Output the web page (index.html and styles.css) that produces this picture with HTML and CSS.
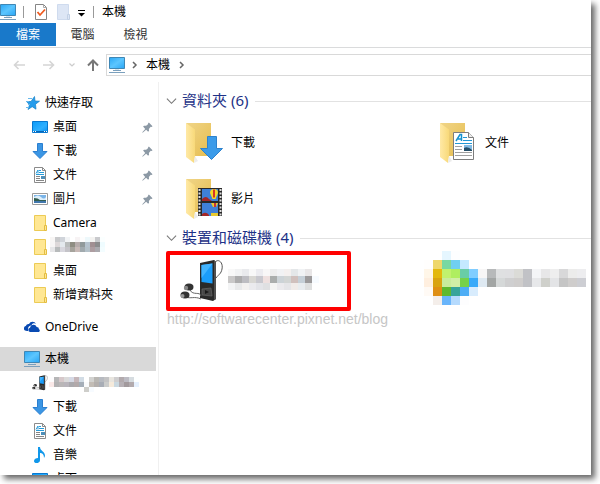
FILE: index.html
```html
<!DOCTYPE html>
<html lang="zh-Hant">
<head>
    <meta charset="UTF-8">
    <meta name="viewport" content="width=device-width, initial-scale=1.0">
    <title>本機</title>
    <link rel="stylesheet" href="styles.css">
</head>
<body>
    <!-- Shared icons -->
    <svg class="sprite" xmlns="http://www.w3.org/2000/svg">
        <defs>
            <linearGradient id="screen" x1="0" y1="0" x2="1" y2="1">
                <stop offset="0" stop-color="#2aa7f5"/>
                <stop offset=".5" stop-color="#5cc6ff"/>
                <stop offset="1" stop-color="#28a5f5"/>
            </linearGradient>
            <linearGradient id="desk" x1="0" y1="0" x2="1" y2="1">
                <stop offset="0" stop-color="#0a9af8"/>
                <stop offset=".6" stop-color="#2fb0ff"/>
                <stop offset="1" stop-color="#0a8ff0"/>
            </linearGradient>
            <linearGradient id="back" x1="0" y1="0" x2="1" y2="1">
                <stop offset="0" stop-color="#f0d588"/>
                <stop offset="1" stop-color="#e6bd4e"/>
            </linearGradient>
            <linearGradient id="flap" x1="0" y1="0" x2="1" y2="0">
                <stop offset="0" stop-color="#ffe9a6"/>
                <stop offset="1" stop-color="#f8d979"/>
            </linearGradient>
        </defs>
        <symbol id="pc" viewBox="0 0 16 16">
            <path d="M.5 .5h15v11H.5z" fill="url(#screen)" stroke="#3f87b5"/>
            <path d="M4 13.5h8M0 15.5h16" stroke="#7ba0bd"/>
            <path d="M6 12h4v1H6z" fill="#d6e4ee"/>
        </symbol>
        <symbol id="desktop" viewBox="0 0 16 16">
            <path d="M.5 2.5h15v11H.5z" fill="url(#desk)" stroke="#0878d0"/>
            <path d="M1 12.5h14" stroke="#0865b5"/>
            <path d="M1 12.5h1M3 12.5h1M12 12.5h1M14 12.5h1" stroke="#fff"/>
        </symbol>
        <symbol id="down" viewBox="0 0 16 16">
            <path d="M5.5.5h5v8h4.500L8 15.5 1 8.500h4.500z" fill="#3b96e4" stroke="#2b7fd0"/>
        </symbol>
        <symbol id="doc" viewBox="0 0 16 16">
            <path d="M2.500.5h8l3 3v12h-11z" fill="#fff" stroke="#8b8b8b"/>
            <path d="M10.500.5v3h3" fill="none" stroke="#8b8b8b"/>
            <path d="M4 6.500 6 3v3.500M7 3.500h2M7 5.500h5M4 7.500h8" fill="none" stroke="#279bd9"/>
            <path d="M4 9.500h4M4 11.500h4M4 13.500h8" stroke="#858585"/>
            <path d="M9 9h4v3H9z" fill="#4e8fb9"/>
        </symbol>
        <symbol id="picture" viewBox="0 0 16 16">
            <path d="M.5 2.500h15v11H.5z" fill="#fff" stroke="#9b9b9b"/>
            <path d="M2 4h12v8H2z" fill="#7ab4e8"/>
            <path d="M2 6q4-3 7 0t5 0v3H2z" fill="#dceefa"/>
            <path d="M2 7q4 0 6 2h6v1H2z" fill="#335e50"/>
            <path d="M2 10h12v2H2z" fill="#4177ad"/>
        </symbol>
        <symbol id="folder" viewBox="0 0 16 16">
            <path d="M2.500.5h11v15h-11z" fill="#ffe793" stroke="#eccb55"/>
            <path d="M12.500 10.500h2v5h-2z" fill="#ffe793" stroke="#e3bc42"/>
        </symbol>
        <symbol id="pin" viewBox="0 0 12 12">
            <path d="m7.500.5 4 4-1 1-1-.2-2 2.200.2 2-1 1L4.500 8.500.7 11.600l-.4-.4L3.500 7.500 1.200 5l1-1 2.300.2L6.800 2.200 6.500 1.500z" fill="#8c99a5"/>
        </symbol>
        <symbol id="star" viewBox="0 0 16 16">
            <path d="m10.500 1.500.5 4.500 4.500.2-4 3 .5 5-3.800-2.500-4.200 2.800 1.500-4.700-3-3.300H7z" fill="#249cec" stroke="#147fc5" stroke-width=".7"/>
            <path d="M4 3.500h4M2 6.500h3M4 9.500h2M2 12.500h3" stroke="#67b8ec"/>
        </symbol>
        <symbol id="cloud" viewBox="0 0 16 16">
            <path d="M1 11.500a2.500 2.500 0 0 1 .8-4.500A3 3 0 0 1 5 5a4 4 0 0 1 7-.3 3 3 0 0 0-4.500 1.500A4 4 0 0 0 4 10v2H3z" fill="#094ab2"/>
            <path d="M6 13a2.200 2.200 0 0 1 0-4.300A3.500 3.500 0 0 1 12.700 8a2.300 2.300 0 0 1 2.300 2.200A1.600 1.600 0 0 1 15 13z" fill="#094ab2"/>
        </symbol>
        <symbol id="music" viewBox="0 0 16 16">
            <path d="M6 0h2c0 4 5 4 5 9l-1 2c0-4-2-5-4-5v7c0 4-6 4-6 1 0-2 2-3 4-3z" fill="#1097ea"/>
        </symbol>
        <symbol id="player" viewBox="0 0 44 44">
            <path d="M34 12c-2-15 10-12 8-2-1 5-3 5-6 9" fill="none" stroke="#555" stroke-width="1"/>
            <path d="m20 4 14-3 2 2v37l-3 2-13-3z" fill="#292929"/>
            <path d="m34 1 2 2v37l-2 1z" fill="#505050"/>
            <path d="m21.500 6 11-1.500v20L21.500 23z" fill="#1b9dfa"/>
            <path d="m21.500 6 11-1.500L21.500 19z" fill="#42b4ff"/>
            <path d="m22 30 9-1 1 8-10-1z" fill="#464646" stroke="#666" stroke-width=".7"/>
            <path d="m25 31 4 2-4 2z" fill="#191919"/>
            <path d="M10 31c3 6 10 1 11 6M6 38c4 2 9-1 15 2" fill="none" stroke="#666"/>
            <ellipse cx="9" cy="28" rx="4.500" ry="3.500" fill="#333"/>
            <circle cx="6" cy="29" r="2.200" fill="#888"/>
            <ellipse cx="5" cy="36" rx="4.500" ry="3.500" fill="#333"/>
            <circle cx="2.500" cy="37" r="2" fill="#999"/>
        </symbol>
        <symbol id="bigfolder" viewBox="0 0 40 40">
            <path d="M0 0h25v33H8z" fill="url(#back)"/>
            <path d="m0 0 9 6.500V33l-1 7-8-6z" fill="url(#flap)"/>
            <path d="m8 40 1-7 3 5z" fill="#ececec"/>
        </symbol>
        <symbol id="toggle" viewBox="0 0 12 8">
            <path d="m1 1.500 5 5 5-5" fill="none" stroke="#777" stroke-width="1.200"/>
        </symbol>
        <symbol id="crumb" viewBox="0 0 6 8">
            <path d="m1 1 3 3-3 3" fill="none" stroke="#666" stroke-width="1.500"/>
        </symbol>
    </svg>

    <div class="window">
        <div class="titlebar">
            <svg class="icon"><use href="#pc"/></svg>
            <span class="separator"></span>
            <svg class="tool-check" viewBox="0 0 12 16">
                <path d="M.5.5h8l3 3v12H.5z" fill="#fff" stroke="#858585"/>
                <path d="M8.500.5v3h3" fill="none" stroke="#aaa"/>
                <path d="m2.500 8 2.500 3 5-5.500" fill="none" stroke="#ef5a1e" stroke-width="1.800"/>
            </svg>
            <svg class="tool-folder" viewBox="0 0 14 16">
                <path d="M.5.5h11v15H.5z" fill="#dde6f5" stroke="#cfdbee"/>
                <path d="M10.500 10.500h2v5h-2z" fill="#dde6f5" stroke="#c2d0e5"/>
            </svg>
            <svg class="tool-more" viewBox="0 0 7 7">
                <path d="M0 .5h7" stroke="#000"/>
                <path d="M0 3h7L3.500 6.500z" fill="#000"/>
            </svg>
            <span class="separator"></span>
            <span class="title">本機</span>
        </div>
        <div class="tabs">
            <span class="tab active">檔案</span>
            <span class="tab">電腦</span>
            <span class="tab">檢視</span>
        </div>
        <div class="toolbar">
            <svg class="arrow back" viewBox="0 0 12 10"><path d="M12 5H1.500M5.500 1l-4 4 4 4" fill="none" stroke="#d5d5d5" stroke-width="1.600"/></svg>
            <svg class="arrow forward" viewBox="0 0 12 10"><path d="M0 5h10.500M6.500 1l4 4-4 4" fill="none" stroke="#d5d5d5" stroke-width="1.600"/></svg>
            <svg class="recent" viewBox="0 0 6 4"><path d="m.5.5 2.500 2.500L5.500.5" fill="none" stroke="#ccc" stroke-width="1.200"/></svg>
            <svg class="up" viewBox="0 0 12 12"><path d="M6 12V1.500M1 6.500l5-5 5 5" fill="none" stroke="#777" stroke-width="2"/></svg>
            <div class="address">
                <svg class="icon"><use href="#pc"/></svg>
                <svg class="crumb"><use href="#crumb"/></svg>
                <span class="place">本機</span>
                <svg class="crumb"><use href="#crumb"/></svg>
            </div>
        </div>

        <div class="content">
            <div class="sidebar">
                <div class="row root"><svg class="icon"><use href="#star"/></svg><span>快速存取</span></div>
                <div class="row"><svg class="icon"><use href="#desktop"/></svg><span>桌面</span><svg class="pin"><use href="#pin"/></svg></div>
                <div class="row"><svg class="icon"><use href="#down"/></svg><span>下載</span><svg class="pin"><use href="#pin"/></svg></div>
                <div class="row"><svg class="icon"><use href="#doc"/></svg><span>文件</span><svg class="pin"><use href="#pin"/></svg></div>
                <div class="row"><svg class="icon"><use href="#picture"/></svg><span>圖片</span><svg class="pin"><use href="#pin"/></svg></div>
                <div class="row"><svg class="icon"><use href="#folder"/></svg><span>Camera</span></div>
                <div class="row"><svg class="icon"><use href="#folder"/></svg><svg class="mosaic mosaic-folder" data-name="folder" data-size="5"></svg></div>
                <div class="row"><svg class="icon"><use href="#folder"/></svg><span>桌面</span></div>
                <div class="row"><svg class="icon"><use href="#folder"/></svg><span>新增資料夾</span></div>
                <div class="row root spaced"><svg class="icon"><use href="#cloud"/></svg><span>OneDrive</span></div>
                <div class="row root spaced selected"><svg class="icon"><use href="#pc"/></svg><span>本機</span></div>
                <div class="row"><svg class="icon"><use href="#player"/></svg><svg class="mosaic mosaic-phone" data-name="phone" data-size="5"></svg></div>
                <div class="row"><svg class="icon"><use href="#down"/></svg><span>下載</span></div>
                <div class="row"><svg class="icon"><use href="#doc"/></svg><span>文件</span></div>
                <div class="row"><svg class="icon"><use href="#music"/></svg><span>音樂</span></div>
                <div class="row"><svg class="icon"><use href="#desktop"/></svg><span>桌面</span></div>
            </div>

            <div class="main">
                <div class="heading"><svg class="toggle"><use href="#toggle"/></svg><span>資料夾 (6)</span></div>
                <div class="folders">
                    <div class="item">
                        <svg class="large" viewBox="0 0 40 40">
                            <use href="#bigfolder" width="40" height="40"/>
                            <path d="M21.500 13.500h9v12h6L25.500 36.500 14.500 25.500h7z" fill="#3b9be9" stroke="#2d82cd"/>
                        </svg>
                        <span>下載</span>
                    </div>
                    <div class="item">
                        <svg class="large" viewBox="0 0 40 40">
                            <use href="#bigfolder" width="40" height="40"/>
                            <path d="M13.500 9.500h15l5 5v22h-20z" fill="#fff" stroke="#7d7d7d"/>
                            <path d="M28.500 9.500v5h5" fill="#eee" stroke="#7d7d7d"/>
                            <path d="m16 18 4-6.500h1.500V18M18 16h4" fill="none" stroke="#1592cf" stroke-width="1.500"/>
                            <path d="M23 14.500h4M23 17.500h9M15 20.500h17" stroke="#2398d5"/>
                            <path d="M15 23.500h7M15 26.500h7M15 29.500h17M15 32.500h17" stroke="#a0a0a0"/>
                            <path d="M24 22h8v6h-8z" fill="#82bbe4"/>
                            <path d="M24 25q4-2 8 2v1h-8z" fill="#254e67"/>
                        </svg>
                        <span>文件</span>
                    </div>
                    <div class="item">
                        <svg class="large" viewBox="0 0 40 40">
                            <use href="#bigfolder" width="40" height="40"/>
                            <path d="M12 9h24v28H12z" fill="#292929"/>
                            <path d="M13.500 10v27M34.500 10v27" stroke="#ddd" stroke-width="2" stroke-dasharray="2 1.500"/>
                            <path d="M16 10h16v12H16zM16 24h16v13H16z" fill="#3f80d8"/>
                            <path d="M16 20q4-4 7 0l3 2H16zM16 35q4-3 7 1v1h-7z" fill="#a32729"/>
                            <path d="M24 14a4 4 0 0 1 8 0l-2.500 6h-3z" fill="#f5d629"/>
                            <path d="M27 10.500h2v8h-2z" fill="#d93427"/>
                            <path d="M25 24h7l-2 4h-3zM25 34h7v3h-7z" fill="#e8ca30"/>
                            <path d="M28 24h2v4h-2z" fill="#c83636"/>
                        </svg>
                        <span>影片</span>
                    </div>
                </div>

                <div class="heading devices-heading"><svg class="toggle"><use href="#toggle"/></svg><span>裝置和磁碟機 (4)</span></div>
                <div class="devices">
                    <div class="device highlighted">
                        <svg class="player"><use href="#player"/></svg>
                        <svg class="mosaic mosaic-device" data-name="device" data-size="7"></svg>
                    </div>
                    <svg class="mosaic mosaic-drive" data-name="drive" data-size="9"></svg>
                </div>
                <div class="blog">http://softwarecenter.pixnet.net/blog</div>
            </div>
        </div>
    </div>

    <script>
        // Each row is a list of colours, a dash leaves the cell empty
        const mosaics = {
            folder: [
                'f8f6f5 c9cacc d0d4da f2f4f6 - f7f3f4 fdfdfd edf8fb f4f3f1 c9cacd fbffff',
                'f7f5f5 ddd8d9 e4e9ee b9bcbc 8f8d82 b6acab 919a9b b5c3ce a18f92 8c8c8d effcff',
                'e6e6e8 b7babb d8d7de c4c3c8 a6a39c c8b9b6 a1aaae b4c1c9 ad9da1 aaa9ae f3fdff'
            ],
            phone: [
                'fdfcfd b6b6b7 d6c8ca dadada d6d9e5 c5b6b9 d2dce5 - d2d2d0 b9b7b3 b7bac0 c3c3c4 e8e5df cfcecf b2aaad bcbbc3 d6dce0 fdffff',
                'fae9e8 b2b1b2 b9b6b7 b8b4bb aaa9ad b2a9aa a5aeb8 f9fafb c2bcb5 b3afad a8adb6 cbcccb f5eadb cad8e0 b6b0b5 a29a9d b2aaad e5f0fd',
                '- - - - - - - cececa f7fbff - - - - - - - - -'
            ],
            device: [
                'f8f8f8 f1f2f3 e9eaed f8f8f8 ececf0 f8f7f7 ededed f1f2f4 f4f0ef e4e7e9 f0f2f4 e8e6e7 -',
                'c9c8c8 acacad bdbdc2 d8d7d3 c8c8ce eee0df aaadac ccd3d7 d2d5d4 d0c0bd c5cfd7 9c9a9b f7fbff',
                'f3f4f5 e8e9ea f3f1f0 ebebee e3e4e8 dfe0e2 f4f4f3 ebeaed e5e5e8 f0ebe9 e8ecef dedfdf -'
            ],
            drive: [
                '- - e5f6ff fdfeff - - - - - - - - - - - - - -',
                'fffefd eed76b 79d8a1 70cff1 c4e9ff - - - - - - - - - - - - -',
                'fff6e8 e3b80d c1f16d afee60 69cda6 80cdff f7f6f6 b7b9ba dfe0e1 dfdfe1 dbdbd7 c1c2c6 f4f5f7 e7e7e8 eeeeee d8d8d9 ececeb ededef',
                'ffefdf d9a310 c8eb9d d0eea6 76d149 38a9f9 dee9f2 a2a5a4 d5d8d8 cfcfd0 cfcdcc c1c2c6 e7e8ea cfd0cb e3e4e6 c5c5c5 cfcdcc cdced3',
                'fffaf5 df8f14 5eb92f 37a49a 4dadf5 d8ecfd - - - - - - - - - - - -',
                '- f4eeea 69b5fb b5dafd fdfdfe - - - - - - - - - - - - -'
            ]
        };

        document.querySelectorAll('.mosaic').forEach(svg => {
            const size = Number(svg.dataset.size);
            mosaics[svg.dataset.name].forEach((line, y) => {
                line.split(' ').forEach((color, x) => {
                    if (color === '-') return;
                    const rect = document.createElementNS('http://www.w3.org/2000/svg', 'rect');
                    rect.setAttribute('x', x * size);
                    rect.setAttribute('y', y * size);
                    rect.setAttribute('width', size);
                    rect.setAttribute('height', size);
                    rect.setAttribute('fill', '#' + color);
                    svg.appendChild(rect);
                });
            });
        });
    </script>
</body>
</html>
```

FILE: styles.css
```css
* {
    box-sizing: border-box;
}

body {
    margin: 0;
    height: 484px;
    overflow: hidden;
    background: #fff;
    color: #000;
    font: 12px "Noto Sans", "Noto Sans CJK TC", sans-serif;
}

svg {
    display: block;
    flex: none;
}

.sprite {
    position: absolute;
    width: 0;
    height: 0;
}

.window {
    display: flex;
    flex-direction: column;
    width: 591px;
    height: 475px;
    overflow: hidden;
    background: #fff;
    box-shadow: 4px 4px 6px rgba(0, 0, 0, 0.6);
}

.icon {
    width: 16px;
    height: 16px;
}

.titlebar {
    display: flex;
    align-items: center;
    height: 23px;
    flex: none;
}

.title {
    padding-bottom: 1px;
}

.separator {
    width: 1px;
    height: 12px;
    margin: 0 11px 0 7px;
    background: #999;
}

.tool-check {
    width: 12px;
    height: 16px;
}

.tool-folder {
    width: 14px;
    height: 16px;
    margin: 0 7px 0 10px;
}

.tool-more {
    width: 7px;
    height: 7px;
    margin-top: 3px;
}

.tool-more + .separator {
    margin: 0 8px;
}

.tabs {
    display: flex;
    height: 25px;
    flex: none;
    border-bottom: 1px solid #dadbdc;
    color: #333;
}

.tab {
    display: flex;
    align-items: center;
    justify-content: center;
    width: 53px;
    height: 23px;
    padding-bottom: 1px;
}

.tab.active {
    width: 56px;
    background: #1979ca;
    color: #fff;
}

.toolbar {
    display: flex;
    align-items: center;
    height: 34px;
    padding: 0 0 0 13px;
    flex: none;
}

.arrow {
    width: 12px;
    height: 10px;
}

.forward {
    margin-left: 18px;
}

.recent {
    width: 6px;
    height: 4px;
    margin: 0 12px 0 14px;
}

.up {
    width: 12px;
    height: 12px;
}

.address {
    display: flex;
    align-items: center;
    flex: 1;
    height: 22px;
    margin-left: 7px;
    padding-left: 2px;
    border: 1px solid #d9d9d9;
    border-right: 0;
}

.crumb {
    width: 6px;
    height: 8px;
    margin: 0 0 1px 7px;
}

.place {
    margin-left: 8px;
    padding-bottom: 2px;
}

.place + .crumb {
    margin-left: 9px;
}

.content {
    display: flex;
    flex: 1;
    min-height: 0;
}

.sidebar {
    width: 159px;
    padding-top: 9px;
    border-right: 1px solid #f0f0f0;
    overflow: hidden;
}

.row {
    display: flex;
    align-items: center;
    gap: 5px;
    width: 156px;
    height: 24px;
    padding: 0 3px 0 32px;
}

.row span,
.item span {
    padding-bottom: 2px;
}

.root {
    padding-left: 24px;
}

.spaced {
    margin-top: 8px;
}

.selected {
    background: #d9d9d9;
}

.pin {
    width: 11px;
    height: 11px;
    margin-left: auto;
}

.mosaic {
    shape-rendering: crispEdges;
}

.mosaic-folder {
    width: 55px;
    height: 15px;
    margin: -5px 0 0 -3px;
}

.mosaic-phone {
    width: 90px;
    height: 15px;
    margin: 3px 0 0 -4px;
}

.main {
    flex: 1;
    padding: 9px 0 0 7px;
}

.heading {
    display: flex;
    align-items: center;
    height: 20px;
    color: #1e3287;
    font-size: 15px;
}

.heading span {
    padding-bottom: 3px;
}

.heading::after {
    content: "";
    flex: 1;
    height: 1px;
    margin-left: 7px;
    background: #e2e2e2;
}

.toggle {
    width: 11px;
    height: 8px;
    margin-right: 5px;
}

.folders {
    display: grid;
    grid-template-columns: 254px 150px;
    grid-auto-rows: 56px;
    padding: 4px 0 0 20px;
}

.item {
    display: flex;
    align-items: center;
    gap: 5px;
}

.large {
    width: 40px;
    height: 40px;
}

.devices-heading {
    margin-top: 1px;
}

.devices {
    display: flex;
    align-items: flex-start;
    padding-top: 3px;
}

.device {
    display: flex;
    align-items: center;
    width: 185px;
    height: 60px;
}

.highlighted {
    border: 4px solid #ff0000;
    border-radius: 2px;
}

.player {
    width: 44px;
    height: 44px;
    margin-left: 10px;
}

.mosaic-device {
    width: 91px;
    height: 21px;
    margin: -3px 0 0 4px;
}

.mosaic-drive {
    width: 162px;
    height: 54px;
    margin-left: 73px;
}

.blog {
    padding-left: 1px;
    color: #c6c6c6;
    font: 14px/16px "Liberation Sans", Arial, sans-serif;
}
```
